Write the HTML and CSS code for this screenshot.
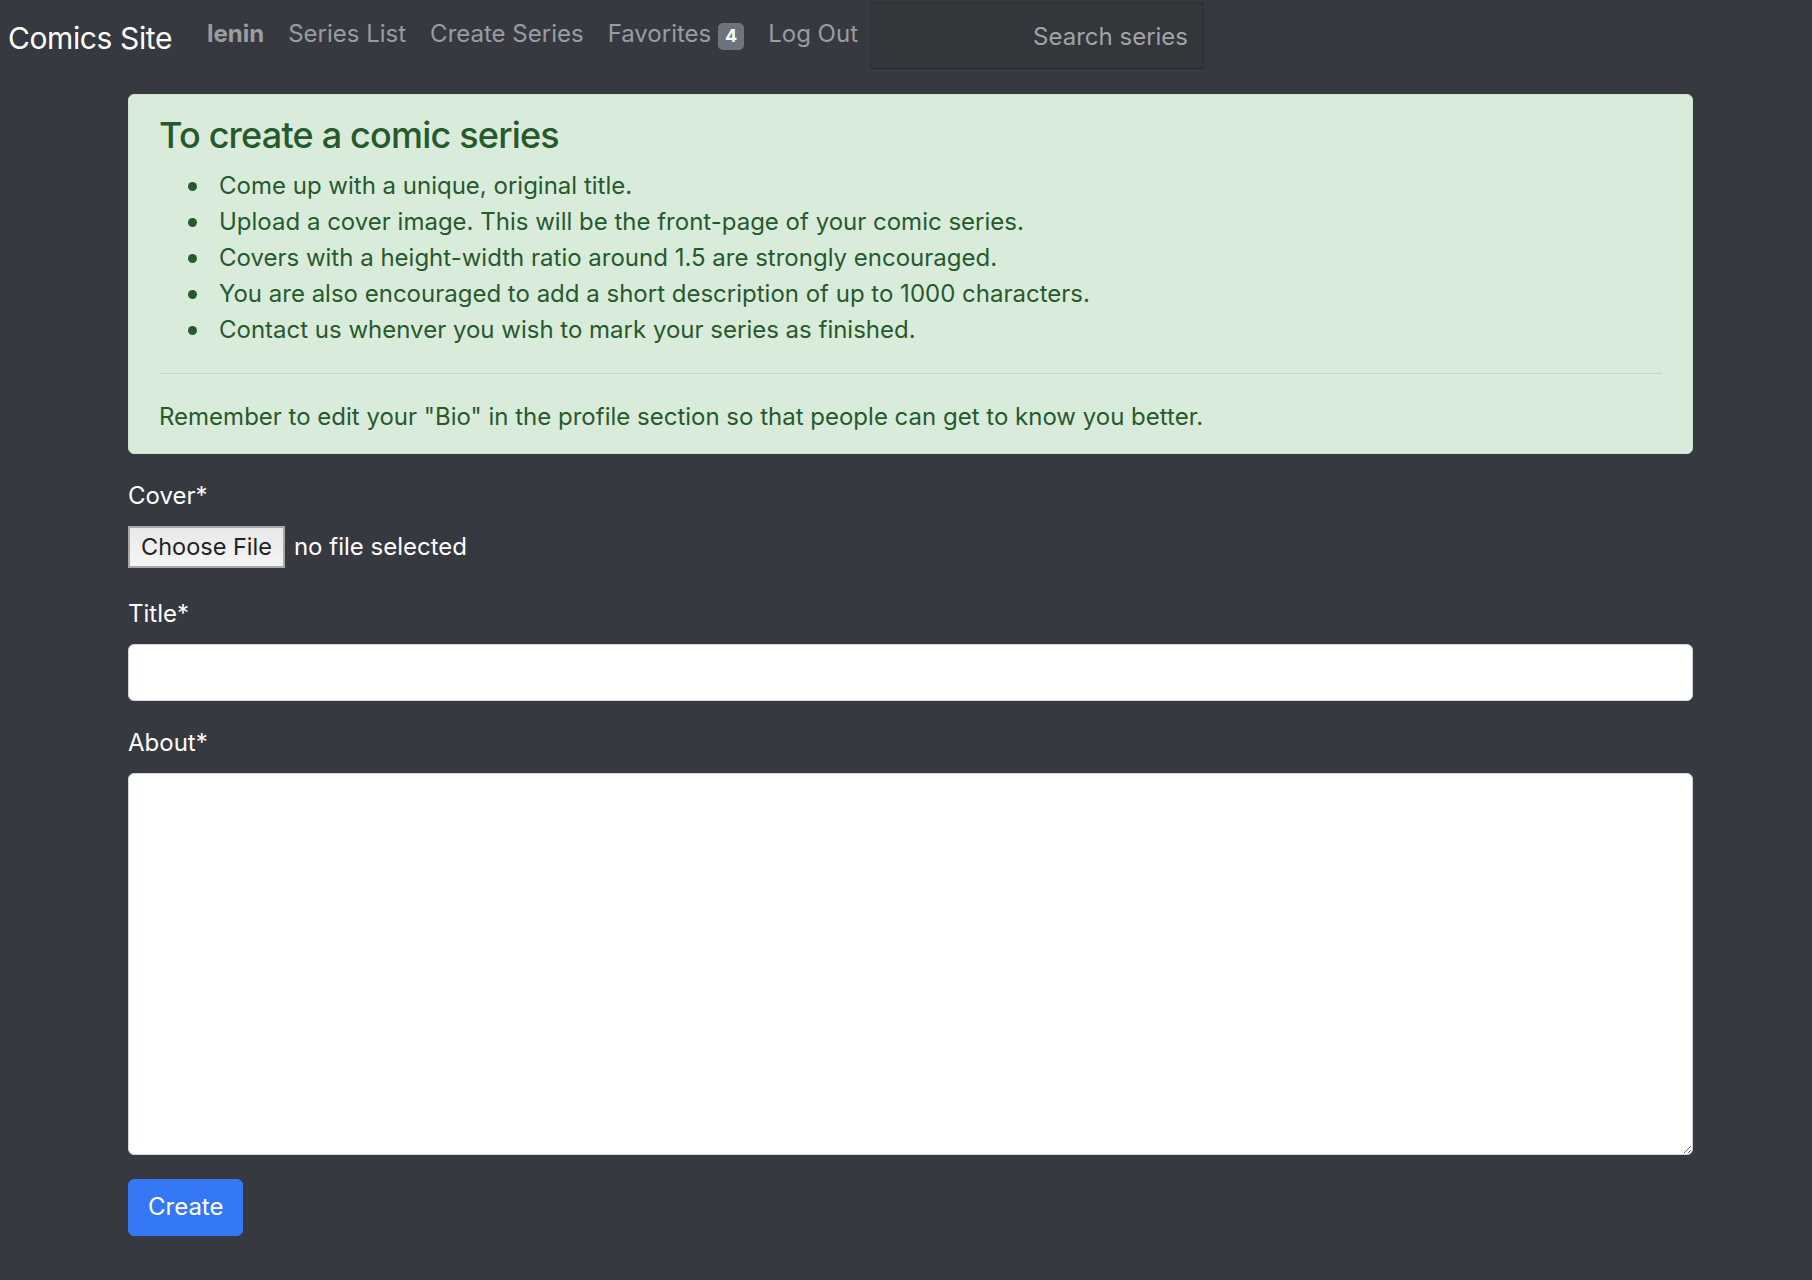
FILE: index.html
```html
<!DOCTYPE html>
<html lang="en">
<head>
<meta charset="utf-8">
<title>Create Series - Comics Site</title>
<link rel="stylesheet" href="styles.css">
</head>
<body>
<nav class="navbar">
  <a class="brand" href="#">Comics Site</a>
  <ul class="nav-links">
    <li><a class="nav-link user" href="#">lenin</a></li>
    <li><a class="nav-link" href="#">Series List</a></li>
    <li><a class="nav-link" href="#">Create Series</a></li>
    <li><a class="nav-link" href="#">Favorites <span class="badge">4</span></a></li>
    <li><a class="nav-link" href="#">Log Out</a></li>
  </ul>
  <form class="search-form">
    <input class="search-input" type="text" placeholder="Search series">
  </form>
</nav>

<main class="container">
  <div class="alert">
    <h4 class="alert-heading">To create a comic series</h4>
    <ul class="tips">
      <li>Come up with a unique, original title.</li>
      <li>Upload a cover image. This will be the front-page of your comic series.</li>
      <li>Covers with a height-width ratio around 1.5 are strongly encouraged.</li>
      <li>You are also encouraged to add a short description of up to 1000 characters.</li>
      <li>Contact us whenver you wish to mark your series as finished.</li>
    </ul>
    <hr class="alert-rule">
    <p class="alert-note">Remember to edit your "Bio" in the profile section so that people can get to know you better.</p>
  </div>

  <form class="series-form">
    <div class="form-group file-group">
      <label class="form-label">Cover*</label>
      <div class="file-row">
        <button type="button" class="file-button">Choose File</button>
        <span class="file-name">no file selected</span>
      </div>
    </div>
    <div class="form-group">
      <label class="form-label" for="title">Title*</label>
      <input class="form-control" id="title" type="text">
    </div>
    <div class="form-group">
      <label class="form-label" for="about">About*</label>
      <textarea class="form-control textarea" id="about" rows="10"></textarea>
    </div>
    <button type="submit" class="btn-primary">Create</button>
  </form>
</main>
</body>
</html>
```

FILE: styles.css
```css
* {
  box-sizing: border-box;
}

html, body {
  margin: 0;
  padding: 0;
}

body {
  background: #36393f;
  color: #ffffff;
  font-family: Inter, "Noto Sans", "Liberation Sans", sans-serif;
  font-size: 24px;
  line-height: 36px;
  min-height: 1280px;
}

/* ---------- Navbar ---------- */
.navbar {
  display: flex;
  align-items: flex-start;
  height: 69px;
}

.brand {
  display: block;
  margin-top: 16px;
  padding-left: 8px;
  margin-right: 23px;
  font-size: 30px;
  line-height: 45px;
  letter-spacing: -0.4px;
  color: #ffffff;
  text-decoration: none;
  white-space: nowrap;
}

.nav-links {
  display: flex;
  list-style: none;
  margin: 16px 0 0 0;
  padding: 0;
}

.nav-link {
  display: block;
  padding: 0 12px;
  color: rgba(255, 255, 255, 0.5);
  text-decoration: none;
  white-space: nowrap;
  line-height: 36px;
}

.nav-link.user {
  font-weight: 700;
}

.badge {
  display: inline-block;
  padding: 4.5px 7px;
  font-size: 18px;
  font-weight: 700;
  line-height: 1;
  color: #ffffff;
  background: #6d747c;
  border-radius: 5px;
  vertical-align: baseline;
}

.search-form {
  margin: 2px 0 0 0;
}

.search-input {
  display: block;
  width: 334px;
  height: 67px;
  padding: 2px 15px 0 15px;
  background: #33363b;
  border: 1.5px solid #2c2f33;
  border-bottom-color: #26292c;
  border-radius: 3px;
  color: #d0d2d4;
  font-family: inherit;
  font-size: 24px;
  text-align: right;
  outline: none;
}

.search-input::placeholder {
  color: #a1a3a6;
}

/* ---------- Main ---------- */
.container {
  padding: 25px 119px 40px 128px;
}

.alert {
  background: #d9ecdc;
  border: 1.5px solid #c8e6cd;
  border-radius: 6px;
  color: #275a2b;
  padding: 18px 30px;
  margin-bottom: 24px;
}

.alert-heading {
  margin: 0 0 11px 0;
  padding-top: 1px;
  font-size: 36px;
  font-weight: 500;
  line-height: 1.2;
  letter-spacing: -0.8px;
  color: inherit;
}

.tips {
  list-style: none;
  margin: 0 0 25px 0;
  padding-left: 60px;
}

.tips li::before {
  content: "";
  display: inline-block;
  width: 9px;
  height: 9px;
  margin-left: -31px;
  margin-right: 22px;
  border-radius: 50%;
  background: currentColor;
  vertical-align: 3px;
}

.alert-rule {
  margin: 0 0 25px 0;
  border: 0;
  border-top: 1.5px solid #b9dec0;
  height: 0;
}

.alert-note {
  margin: 0;
}

/* ---------- Form ---------- */
.form-group {
  margin-bottom: 24px;
}

.file-group {
  margin-bottom: 27.5px;
}

.form-label {
  display: block;
  margin-bottom: 12px;
  color: #ffffff;
}

.file-row {
  display: flex;
  align-items: center;
  height: 42px;
  margin-top: 4px;
}

.file-button {
  height: 42px;
  padding: 0 11px;
  margin-right: 9px;
  background: linear-gradient(#e8e8e8, #f5f5f5);
  border: 2px solid #a8a8a8;
  border-radius: 0;
  color: #222222;
  font-family: inherit;
  font-size: 23.5px;
  line-height: 1;
}

.file-name {
  color: #ffffff;
}

.form-control {
  display: block;
  width: 100%;
  height: 57px;
  padding: 9px 18px;
  background: #ffffff;
  border: 1.5px solid #ced4da;
  border-radius: 6px;
  font-family: inherit;
  font-size: 24px;
  color: #495057;
  outline: none;
}

.textarea {
  height: 382px;
  resize: vertical;
}

.btn-primary {
  display: inline-block;
  height: 57px;
  padding: 0 19px;
  background: #3478f6;
  border: 1.5px solid #3478f6;
  border-radius: 6px;
  color: #ffffff;
  font-family: inherit;
  font-size: 24px;
  line-height: 1;
}
```
